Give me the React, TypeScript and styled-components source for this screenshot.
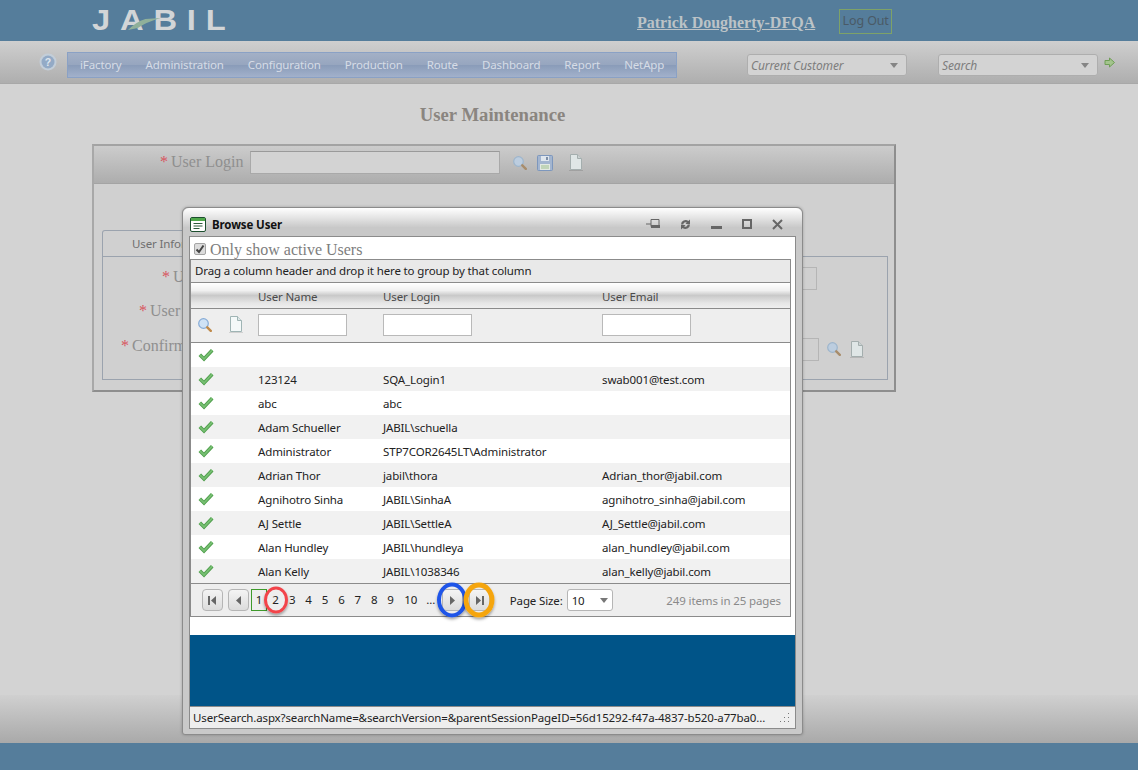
import React from 'react';
import styled, { createGlobalStyle } from 'styled-components';

const UI_FONT = '"Noto Sans", "Open Sans", "Liberation Sans", sans-serif';
const SERIF_FONT = '"Liberation Serif", "Times New Roman", serif';

const GlobalStyle = createGlobalStyle`
  html, body {
    margin: 0;
    padding: 0;
    background: #d3d3d3;
  }
  * {
    box-sizing: border-box;
  }
`;

const Page = styled.div`
  position: relative;
  width: 1138px;
  height: 770px;
  overflow: hidden;
  display: flex;
  flex-direction: column;
  font-family: ${UI_FONT};
  font-size: 11.5px;
  letter-spacing: -0.13px;
`;

const TopBar = styled.header`
  height: 41px;
  background: #557d9b;
  display: flex;
  align-items: flex-start;
  padding-left: 92px;
`;

const Logo = styled.div`
  position: relative;
  width: 134px;
  margin-top: 4px;
  font-family: "Liberation Sans", sans-serif;
  font-size: 30px;
  line-height: 31px;
  font-weight: 700;
  letter-spacing: 9px;
  white-space: nowrap;
  color: #d2d5d7;
  transform: scaleX(1.09);
  transform-origin: left center;
`;

const LogoSwoosh = styled.svg`
  position: absolute;
  left: 32px;
  top: 13px;
`;

const UserLink = styled.a`
  margin: 14px 0 0 411px;
  font-family: ${SERIF_FONT};
  font-size: 16px;
  line-height: 18px;
  font-weight: 700;
  letter-spacing: 0;
  color: #bcc3c7;
  text-decoration: underline;
`;

const LogOutButton = styled.div`
  margin: 9px 0 0 24px;
  width: 53px;
  height: 25px;
  border: 1px solid #7ea268;
  font-size: 12.5px;
  line-height: 22px;
  text-align: center;
  color: #4a5a66;
`;

const ToolBar = styled.nav`
  height: 43px;
  background: linear-gradient(#cfcfcf, #aeaeae);
  border-bottom: 1px solid #a8a8a8;
  display: flex;
  align-items: flex-start;
`;

const HelpIcon = styled.svg`
  margin: 12px 0 0 39px;
`;

const MenuBar = styled.ul`
  list-style: none;
  margin: 11px 0 0 10px;
  padding: 0;
  width: 610px;
  height: 26px;
  display: flex;
  border: 1px solid #8aa1c5;
  background: linear-gradient(#a3b0c6 0%, #97a6bf 48%, #8a9cb9 52%, #a2b1cb 100%);
`;

const MenuItem = styled.li`
  padding: 0 12px;
  line-height: 24px;
  color: #d6dce6;
  white-space: nowrap;
`;

const Combo = styled.div<{ $left: number }>`
  margin: 13px 0 0 ${({ $left }) => $left}px;
  width: 160px;
  height: 22px;
  border: 1px solid #aeaeae;
  border-radius: 3px;
  background: #d3d3d3;
  display: flex;
  align-items: center;
  justify-content: space-between;
  padding: 0 8px 0 3px;
  font-size: 12px;
  font-style: italic;
  color: #7d7d7d;
`;

const ComboArrow = styled.span<{ $color?: string }>`
  width: 0;
  height: 0;
  border-left: 4px solid transparent;
  border-right: 4px solid transparent;
  border-top: 5px solid ${({ $color }) => $color ?? '#858585'};
`;

const GoIcon = styled.svg`
  margin: 16px 0 0 6px;
`;

const Main = styled.main`
  flex: 1;
  background: #d3d3d3;
  display: flex;
  flex-direction: column;
  align-items: flex-start;
`;

const PageTitle = styled.h1`
  width: 985px;
  margin: 21px 0 0;
  font-family: ${SERIF_FONT};
  font-size: 18.7px;
  line-height: 20px;
  font-weight: 700;
  letter-spacing: 0;
  text-align: center;
  color: #8a8580;
`;

const FormPanel = styled.section`
  margin: 19px 0 0 92px;
  width: 804px;
  height: 248px;
  border: 2px solid #8e8e8e;
  border-top-color: #a3a3a3;
  border-left-color: #a8a8a8;
  background: #d0d0d0;
`;

const FormHeader = styled.div`
  height: 38px;
  background: linear-gradient(#cccccc, #adadad);
  border-bottom: 1px solid #a4a4a4;
  display: flex;
  align-items: flex-start;
  padding: 5px 0 0 66px;
`;

const Asterisk = styled.span`
  color: #d8535e;
  margin-right: 3px;
`;

const FieldLabel = styled.label`
  font-family: ${SERIF_FONT};
  font-size: 16px;
  line-height: 21px;
  letter-spacing: 0;
  color: #8f8f8f;
  white-space: nowrap;
`;

const LoginInput = styled.div`
  margin-left: 7px;
  width: 250px;
  height: 23px;
  border: 1px solid #a9a9a9;
  border-top-color: #9a9a9a;
  background: #d3d3d3;
`;

const FormIcons = styled.div`
  margin-left: 13px;
  height: 23px;
  display: flex;
  align-items: center;
  gap: 10px;
`;

const DocSlot = styled.span`
  display: flex;
  margin-left: 6px;
`;

const TabStrip = styled.div`
  margin: 46px 0 0 8px;
  width: 130px;
  height: 26px;
  border: 1px solid #9ba3ae;
  border-bottom: none;
  border-radius: 3px 3px 0 0;
  padding-left: 29px;
  line-height: 25px;
  color: #6f6f6f;
  white-space: nowrap;
  overflow: hidden;
`;

const TabBody = styled.div`
  margin-left: 8px;
  width: 786px;
  height: 124px;
  border: 1px solid #9ba3ae;
  display: grid;
  grid-template-rows: repeat(3, 34.5px);
  padding-top: 2px;
`;

const TabRow = styled.div<{ $indent: number }>`
  display: flex;
  align-items: center;
  justify-content: space-between;
  padding-left: ${({ $indent }) => $indent}px;
`;

const TabInputGroup = styled.div`
  display: flex;
  align-items: center;
  gap: 9px;
  margin-top: 8px;
`;

const TabInput = styled.div<{ $right: number; $top: number }>`
  width: 40px;
  height: 23px;
  margin-top: ${({ $top }) => $top}px;
  margin-right: ${({ $right }) => $right}px;
  border: 1px solid #b5b5b5;
  border-left: none;
`;

const IconSpacer = styled.span`
  width: 14px;
`;

const Footer = styled.div`
  height: 48px;
  background: linear-gradient(#d0d0d0, #a9a9a9);
`;

const BottomBar = styled.div`
  height: 27px;
  background: #557d9b;
`;

const Dialog = styled.div`
  position: absolute;
  left: 182px;
  top: 207px;
  width: 621px;
  height: 528px;
  border: 1px solid #8b8b8b;
  border-radius: 6px 6px 3px 3px;
  background: #c9c9c9;
  padding: 0 6px 5px 6px;
  display: flex;
  flex-direction: column;
  box-shadow: 0 0 3px rgba(0, 0, 0, 0.25);
`;

const DialogTitleBar = styled.div`
  flex: 0 0 28px;
  margin: 0 -6px;
  padding: 4px 0 0 7px;
  background: linear-gradient(#ffffff 0%, #e4e4e4 35%, #c8c8c8 70%, #c8c8c8 100%);
  border-radius: 6px 6px 0 0;
  display: flex;
  align-items: center;
`;

const DialogTitle = styled.span`
  margin-left: 6px;
  font-size: 11.5px;
  font-weight: 700;
  color: #111;
`;

const WindowActions = styled.div`
  margin-left: auto;
  padding-right: 19px;
  display: flex;
  align-items: center;
  gap: 20px;
`;

const DialogBody = styled.div`
  flex: 1;
  border: 1px solid #8b8b8b;
  background: #fff;
  display: flex;
  flex-direction: column;
`;

const ActiveFilter = styled.div`
  height: 22px;
  padding: 4px 0 0 4px;
  display: flex;
  align-items: center;
  gap: 4px;
  font-family: ${SERIF_FONT};
  font-size: 16px;
  letter-spacing: 0;
  color: #7d7d7d;
`;

const CheckBox = styled.span`
  width: 12px;
  height: 12px;
  margin-top: -3px;
  border: 1px solid #a5a5a5;
  border-radius: 2px;
  background: #dcdcdc;
  display: flex;
  align-items: center;
  justify-content: center;
`;

const Grid = styled.div`
  margin: 0 4px 0 0;
  border: 1px solid #8b8b8b;
`;

const GroupHint = styled.div`
  height: 23px;
  background: #e9e9e9;
  border-bottom: 1px solid #8b8b8b;
  padding-left: 4px;
  line-height: 22px;
  color: #222;
`;

const columns = '59px 125px 219px 1fr';

const HeaderRow = styled.div`
  height: 26px;
  display: grid;
  grid-template-columns: ${columns};
  background: linear-gradient(#ffffff 0%, #f0f0f0 30%, #c9c9c9 50%, #e6e6e6 80%, #efefef 100%);
  border-bottom: 1px solid #8b8b8b;
`;

const HeaderCell = styled.div`
  padding-left: 8px;
  line-height: 28px;
  color: #4a4a4a;
  &:first-child {
    padding: 0;
  }
`;

const FilterRow = styled.div`
  height: 34px;
  display: grid;
  grid-template-columns: ${columns};
  align-items: center;
  padding-bottom: 2px;
  background: #eeeeee;
  border-bottom: 1px solid #8b8b8b;
`;

const FilterIcons = styled.div`
  display: flex;
  align-items: center;
  gap: 17px;
  padding-left: 7px;
`;

const FilterCell = styled.div`
  padding-left: 8px;
`;

const FilterInput = styled.input`
  display: block;
  width: 89px;
  height: 22px;
  border: 1px solid #b9b9b9;
  background: #fff;
  padding: 0 3px;
`;

const DataRow = styled.div<{ $alt: boolean }>`
  height: 24px;
  display: grid;
  grid-template-columns: ${columns};
  align-items: center;
  background: ${({ $alt }) => ($alt ? '#f1f1f1' : '#ffffff')};
`;

const DataCell = styled.div`
  padding-left: 8px;
  color: #222;
  white-space: nowrap;
`;

const CheckCell = styled.div`
  padding-left: 7px;
  display: flex;
  align-items: center;
`;

const Pager = styled.div`
  height: 33px;
  border-top: 1px solid #8b8b8b;
  background: #eeeeee;
  display: flex;
  align-items: center;
  padding: 0 9px 0 11px;
  color: #222;
`;

const PagerButton = styled.span<{ $left: number }>`
  position: relative;
  width: 21px;
  height: 22px;
  margin-left: ${({ $left }) => $left}px;
  border: 1px solid #b5b5b5;
  border-radius: 4px;
  background: linear-gradient(#f4f4f4, #dcdcdc);
  display: flex;
  align-items: center;
  justify-content: center;
`;

const PageNumbers = styled.div`
  display: flex;
  align-items: center;
  margin-left: 2px;
`;

const PageNumber = styled.span<{ $selected?: boolean; $width: number }>`
  position: relative;
  width: ${({ $width }) => $width}px;
  height: 22px;
  line-height: 20px;
  text-align: center;
  border: 1px solid ${({ $selected }) => ($selected ? '#3f9a2c' : 'transparent')};
`;

const Ring = styled.span<{ $color: string; $w: number; $h: number; $stroke: number }>`
  position: absolute;
  left: 50%;
  top: 50%;
  width: ${({ $w }) => $w}px;
  height: ${({ $h }) => $h}px;
  transform: translate(-50%, -50%);
  border: ${({ $stroke }) => $stroke}px solid ${({ $color }) => $color};
  border-radius: 50%;
  box-shadow: 0 2px 3px rgba(0, 0, 0, 0.35);
`;

const PageSizeLabel = styled.span`
  margin-left: 20px;
`;

const PageSizeSelect = styled.div`
  margin-left: 4px;
  width: 46px;
  height: 22px;
  border: 1px solid #b5b5b5;
  border-radius: 3px;
  background: #fff;
  display: flex;
  align-items: center;
  justify-content: space-between;
  padding: 0 4px;
`;

const PagerInfo = styled.span`
  margin-left: auto;
  color: #8a8a8a;
`;

const PreviewBand = styled.div`
  margin-top: 18px;
  height: 71px;
  background: #005488;
`;

const StatusBar = styled.div`
  flex: 1;
  border-top: 1px solid #8b8b8b;
  background: #eeeeee;
  display: flex;
  align-items: center;
  justify-content: space-between;
  padding: 0 5px 0 3px;
  color: #222;
  white-space: nowrap;
`;

const SearchIcon = ({ dim }: { dim?: boolean }) => (
  <svg width="14" height="14" viewBox="0 0 14 14">
    <circle cx="5.500" cy="5.500" r="4.800" fill={dim ? '#bccddf' : '#cfe2f5'} stroke={dim ? '#9db5cc' : '#86abd6'} strokeWidth="1.200" />
    <path d="M9.300 9.300 12.800 12.800" stroke={dim ? '#a88d6c' : '#c08a4a'} strokeWidth="2.400" strokeLinecap="round" />
  </svg>
);

const DocIcon = ({ dim }: { dim?: boolean }) => (
  <svg width="14" height="17" viewBox="0 0 14 17">
    <path d="M1.500.5h7l4 4v11h-11z" fill={dim ? '#dfe6e6' : '#f4f9f9'} stroke={dim ? '#a4aeae' : '#9fb4b4'} />
    <path d="M8.500.5v4h4" fill={dim ? '#cbd2d2' : '#dfe8e8'} stroke={dim ? '#a4aeae' : '#9fb4b4'} />
    <path d="M0 16.500h14" stroke="#000" strokeOpacity=".12" />
  </svg>
);

const SaveIcon = () => (
  <svg width="16" height="16" viewBox="0 0 16 16">
    <rect x=".5" y=".5" width="15" height="15" rx="1" fill="#a3b5cf" stroke="#7d97bd" />
    <rect x="4" y="1" width="8" height="5" fill="#dfe6ee" />
    <rect x="9" y="2" width="2" height="3" fill="#7d8fa8" />
    <rect x="3" y="9" width="10" height="6" fill="#e2e8e2" />
    <path d="M4 11h8M4 13h8" stroke="#9fc08e" />
  </svg>
);

const CheckIcon = () => (
  <svg width="16" height="14" viewBox="0 0 16 14">
    <path d="M1.800 6.800 6 11 14.200 2.200" stroke="#4f9e4c" strokeWidth="3.600" fill="none" />
    <path d="M1.800 6.800 6 11 14.200 2.200" stroke="#78c073" strokeWidth="1.800" fill="none" />
  </svg>
);

const TriangleLeft = () => (
  <svg width="6" height="9" viewBox="0 0 6 9"><path d="M5 0v9L0 4.500z" fill="#666" /></svg>
);

const TriangleRight = () => (
  <svg width="6" height="9" viewBox="0 0 6 9"><path d="M1 0v9l5-4.500z" fill="#666" /></svg>
);

const FirstPage = () => (
  <svg width="9" height="9" viewBox="0 0 9 9"><path d="M0 0h2v9H0zM8 0v9L3 4.500z" fill="#666" /></svg>
);

const LastPage = () => (
  <svg width="9" height="9" viewBox="0 0 9 9"><path d="M1 0v9l5-4.500zM7 0h2v9H7z" fill="#666" /></svg>
);

const users = [
  ['', '', ''],
  ['123124', 'SQA_Login1', 'swab001@test.com'],
  ['abc', 'abc', ''],
  ['Adam Schueller', 'JABIL\\schuella', ''],
  ['Administrator', 'STP7COR2645LT\\Administrator', ''],
  ['Adrian Thor', 'jabil\\thora', 'Adrian_thor@jabil.com'],
  ['Agnihotro Sinha', 'JABIL\\SinhaA', 'agnihotro_sinha@jabil.com'],
  ['AJ Settle', 'JABIL\\SettleA', 'AJ_Settle@jabil.com'],
  ['Alan Hundley', 'JABIL\\hundleya', 'alan_hundley@jabil.com'],
  ['Alan Kelly', 'JABIL\\1038346', 'alan_kelly@jabil.com'],
];

const menuItems = ['iFactory', 'Administration', 'Configuration', 'Production', 'Route', 'Dashboard', 'Report', 'NetApp'];
const pages = ['3', '4', '5', '6', '7', '8', '9'];

export default function App() {
  return (
    <Page>
      <GlobalStyle />
      <TopBar>
        <Logo>
          JABIL
          <LogoSwoosh width="32" height="14" viewBox="0 0 32 14">
            <path d="M31 1 L17 2 Q8 5 1 13 L10 11 Q18 5 31 1z" fill="#8fb09a" />
          </LogoSwoosh>
        </Logo>
        <UserLink>Patrick Dougherty-DFQA</UserLink>
        <LogOutButton>Log Out</LogOutButton>
      </TopBar>

      <ToolBar>
        <HelpIcon width="18" height="18" viewBox="0 0 18 18">
          <circle cx="9" cy="9" r="8.500" fill="#c3ced9" />
          <circle cx="9" cy="9" r="6.500" fill="#93aac6" />
          <text x="9" y="12.800" textAnchor="middle" fontSize="10.500" fontWeight="700" fill="#dfe6ee" fontFamily="Liberation Sans, sans-serif">?</text>
        </HelpIcon>
        <MenuBar>
          {menuItems.map((item) => (
            <MenuItem key={item}>{item}</MenuItem>
          ))}
        </MenuBar>
        <Combo $left={70}>
          Current Customer
          <ComboArrow />
        </Combo>
        <Combo $left={31}>
          Search
          <ComboArrow />
        </Combo>
        <GoIcon width="11" height="11" viewBox="0 0 11 11">
          <path d="M1 3.500h4.500V1L10.500 5.500 5.500 10V7.500H1z" fill="#a3c48d" stroke="#6f9e56" />
        </GoIcon>
      </ToolBar>

      <Main>
        <PageTitle>User Maintenance</PageTitle>
        <FormPanel>
          <FormHeader>
            <FieldLabel><Asterisk>*</Asterisk>User Login</FieldLabel>
            <LoginInput />
            <FormIcons>
              <SearchIcon dim />
              <SaveIcon />
              <DocSlot><DocIcon dim /></DocSlot>
            </FormIcons>
          </FormHeader>
          <TabStrip>User Information</TabStrip>
          <TabBody>
            <TabRow $indent={59}>
              <FieldLabel><Asterisk>*</Asterisk>User Name</FieldLabel>
              <TabInput $right={70} $top={4} />
            </TabRow>
            <TabRow $indent={36}>
              <FieldLabel><Asterisk>*</Asterisk>User Password</FieldLabel>
            </TabRow>
            <TabRow $indent={18}>
              <FieldLabel><Asterisk>*</Asterisk>Confirm Password</FieldLabel>
              <TabInputGroup>
                <TabInput $right={-1} $top={0} />
                <SearchIcon dim />
                <DocIcon dim />
                <IconSpacer />
              </TabInputGroup>
            </TabRow>
          </TabBody>
        </FormPanel>
      </Main>

      <Footer />
      <BottomBar />

      <Dialog>
        <DialogTitleBar>
          <svg width="16" height="15" viewBox="0 0 16 15">
            <rect x=".5" y=".5" width="15" height="14" rx="1.500" fill="#fff" stroke="#1c4e2e" />
            <rect x="1" y="1" width="14" height="3" fill="#4fa84a" />
            <path d="M3.500 6.500h9M3.500 9h9M3.500 11.500h6" stroke="#2c5a3a" />
          </svg>
          <DialogTitle>Browse User</DialogTitle>
          <WindowActions>
            <svg width="14" height="10" viewBox="0 0 14 10">
              <path d="M0 5h5" stroke="#666" />
              <path d="M5 .5h8v7H5z" fill="none" stroke="#666" />
              <path d="M5 6h9v3H5z" fill="#666" />
            </svg>
            <svg width="11" height="11" viewBox="0 0 11 11">
              <path d="M1 5.500a4.500 4.500 0 0 1 7.400-3.400L10 .5V5H5.500l1.300-1.400A2.400 2.400 0 0 0 3.300 5.500zM10 5.500a4.500 4.500 0 0 1-7.400 3.400L1 10.500V6h4.500L4.200 7.400a2.400 2.400 0 0 0 3.500-1.900z" fill="#666" />
            </svg>
            <svg width="11" height="11" viewBox="0 0 11 11"><path d="M0 7h11v3H0z" fill="#666" /></svg>
            <svg width="10" height="10" viewBox="0 0 10 10">
              <rect x="1" y="1" width="8" height="8" fill="none" stroke="#666" strokeWidth="2" />
            </svg>
            <svg width="11" height="11" viewBox="0 0 11 11">
              <path d="M1 1l9 9M10 1l-9 9" stroke="#666" strokeWidth="2" />
            </svg>
          </WindowActions>
        </DialogTitleBar>

        <DialogBody>
          <ActiveFilter>
            <CheckBox>
              <svg width="10" height="10" viewBox="0 0 10 10">
                <path d="M1.500 5.500 4 8l4.500-6.500" stroke="#444" strokeWidth="2" fill="none" />
              </svg>
            </CheckBox>
            Only show active Users
          </ActiveFilter>
          <Grid>
            <GroupHint>Drag a column header and drop it here to group by that column</GroupHint>
            <HeaderRow>
              <HeaderCell />
              <HeaderCell>User Name</HeaderCell>
              <HeaderCell>User Login</HeaderCell>
              <HeaderCell>User Email</HeaderCell>
            </HeaderRow>
            <FilterRow>
              <FilterIcons>
                <SearchIcon />
                <DocIcon />
              </FilterIcons>
              <FilterCell><FilterInput /></FilterCell>
              <FilterCell><FilterInput /></FilterCell>
              <FilterCell><FilterInput /></FilterCell>
            </FilterRow>
            {users.map((user, i) => (
              <DataRow key={i} $alt={i % 2 === 1}>
                <CheckCell><CheckIcon /></CheckCell>
                <DataCell>{user[0]}</DataCell>
                <DataCell>{user[1]}</DataCell>
                <DataCell>{user[2]}</DataCell>
              </DataRow>
            ))}
            <Pager>
              <PagerButton $left={0}><FirstPage /></PagerButton>
              <PagerButton $left={5}><TriangleLeft /></PagerButton>
              <PageNumbers>
                <PageNumber $selected $width={16}>1</PageNumber>
                <PageNumber $width={17}>
                  2
                  <Ring $color="#f2444a" $w={24} $h={27} $stroke={3} />
                </PageNumber>
                {pages.map((p) => (
                  <PageNumber key={p} $width={16.4}>{p}</PageNumber>
                ))}
                <PageNumber $width={24}>10</PageNumber>
                <PageNumber $width={16}>...</PageNumber>
              </PageNumbers>
              <PagerButton $left={3}>
                <TriangleRight />
                <Ring $color="#1f55e8" $w={30} $h={35} $stroke={4} />
              </PagerButton>
              <PagerButton $left={6}>
                <LastPage />
                <Ring $color="#f5a50d" $w={31} $h={35} $stroke={5} />
              </PagerButton>
              <PageSizeLabel>Page Size:</PageSizeLabel>
              <PageSizeSelect>
                10
                <ComboArrow $color="#777" />
              </PageSizeSelect>
              <PagerInfo>249 items in 25 pages</PagerInfo>
            </Pager>
          </Grid>
          <PreviewBand />
          <StatusBar>
            <span>UserSearch.aspx?searchName=&amp;searchVersion=&amp;parentSessionPageID=56d15292-f47a-4837-b520-a77ba0...</span>
            <svg width="11" height="11" viewBox="0 0 11 11">
              <path d="M9 1h1v1H9zM9 5h1v1H9zM5 5h1v1H5zM9 9h1v1H9zM5 9h1v1H5zM1 9h1v1H1z" fill="#777" />
            </svg>
          </StatusBar>
        </DialogBody>
      </Dialog>
    </Page>
  );
}
